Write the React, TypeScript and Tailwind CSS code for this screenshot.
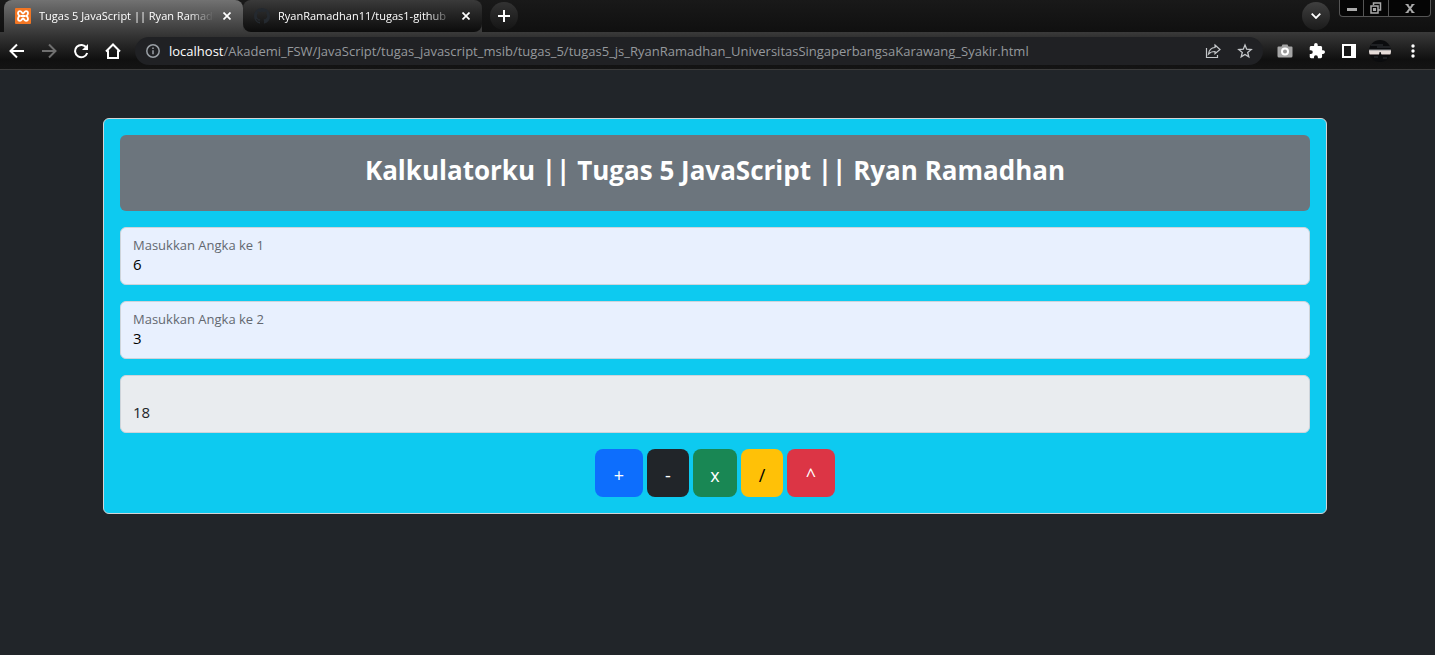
import { useState } from 'react';

const fontStack = "font-['Open_Sans','Noto_Sans',sans-serif]";

function XamppIcon() {
  return (
    <svg width="16" height="16" viewBox="0 0 16 16" aria-hidden="true" className="shrink-0">
      <rect width="16" height="16" rx="1" fill="#f37623" />
      <path
        d="M5 3.200C3.500 3.200 3 4.200 3 5.300c0 1.400.6 2 1.500 2.700C3.600 8.700 3 9.300 3 10.700c0 1.100.5 2.100 2 2.100 1.800 0 1.800-2.300 3-2.300s1.200 2.300 3 2.300c1.500 0 2-1 2-2.100 0-1.400-.6-2-1.500-2.700.9-.7 1.500-1.300 1.500-2.700 0-1.100-.5-2.100-2-2.100-1.800 0-1.800 2.300-3 2.300S6.800 3.200 5 3.200z"
        fill="none"
        stroke="#fff"
        strokeWidth="1.800"
        strokeLinejoin="round"
      />
      <path d="M6 8h4" stroke="#fff" strokeWidth="1.800" strokeLinecap="round" />
    </svg>
  );
}

function GithubIcon() {
  return (
    <svg width="16" height="16" viewBox="0 0 16 16" aria-hidden="true" className="shrink-0">
      <path
        fill="#24292f"
        d="M8 0C3.580 0 0 3.580 0 8c0 3.540 2.290 6.530 5.470 7.590.4.070.550-.170.550-.380 0-.190-.010-.820-.010-1.490-2.010.370-2.530-.490-2.690-.940-.090-.230-.480-.940-.820-1.130-.280-.150-.680-.520-.010-.530.630-.010 1.080.580 1.230.820.720 1.210 1.870.870 2.330.660.070-.520.280-.870.510-1.070-1.780-.2-3.640-.890-3.640-3.950 0-.870.310-1.590.820-2.150-.080-.2-.360-1.020.080-2.120 0 0 .670-.210 2.200.820a7.600 7.600 0 0 1 4 0c1.530-1.040 2.200-.820 2.200-.820.440 1.100.160 1.920.080 2.120.510.560.820 1.270.820 2.150 0 3.070-1.870 3.750-3.650 3.950.290.250.540.730.540 1.480 0 1.070-.010 1.930-.010 2.200 0 .210.150.460.550.380A8 8 0 0 0 16 8c0-4.420-3.580-8-8-8z"
      />
    </svg>
  );
}

function CloseIcon() {
  return (
    <svg width="8" height="8" viewBox="0 0 8 8" stroke="#fff" strokeWidth="1.700" aria-hidden="true">
      <path d="M.5.5l7 7M7.500.500l-7 7" />
    </svg>
  );
}

function Avatar() {
  return (
    <svg width="22" height="22" viewBox="0 0 22 22" aria-hidden="true">
      <clipPath id="avatar-clip">
        <circle cx="11" cy="11" r="11" />
      </clipPath>
      <g clipPath="url(#avatar-clip)">
        <rect width="22" height="22" fill="#0b0c0e" />
        <path d="M2 5h12M8 7h14" stroke="#34373b" />
        <rect y="9.500" width="22" height="2" fill="#8d8f93" />
        <rect y="10.500" width="22" height="3.500" fill="#e5dcd8" />
        <rect y="14" width="22" height="1" fill="#756b6b" />
        <path d="M10 22v-7l.6-3h1l.9 3v7z" fill="#0b0c0e" />
        <path d="M5 17h4M14 18h4" stroke="#303236" />
      </g>
    </svg>
  );
}

function BrowserTabs() {
  return (
    <div className="flex h-8 items-start bg-linear-to-b from-[#191919] to-[#101010] pl-1">
      <div className="flex h-8 w-[239px] items-center gap-2 rounded-t-lg bg-linear-to-b from-[#727272] to-[#3a3a3a] pr-[11px] pl-[11px]">
        <XamppIcon />
        <span className="min-w-0 flex-1 overflow-hidden text-[11px] leading-4 whitespace-nowrap text-white mask-r-from-85%">
          Tugas 5 JavaScript || Ryan Ramadhan
        </span>
        <button aria-label="Close tab" className="p-px"><CloseIcon /></button>
      </div>
      <div className="h-8 w-[239px] bg-linear-to-b from-[#191919] from-70% to-[#3a3a3a] to-70%">
        <div className="flex h-8 items-center gap-2 rounded-lg bg-linear-to-b from-[#3a3a3a] to-[#0c0c0c] pr-[11px] pl-[11px]">
          <GithubIcon />
          <span className="min-w-0 flex-1 overflow-hidden text-[11px] leading-4 whitespace-nowrap text-white mask-r-from-85%">
            RyanRamadhan11/tugas1-github
          </span>
          <button aria-label="Close tab" className="p-px"><CloseIcon /></button>
        </div>
      </div>
      <button
        aria-label="New tab"
        className="mt-0.5 ml-2 grid size-7 place-items-center rounded-full bg-linear-to-b from-[#333] to-[#151515]"
      >
        <svg width="12" height="12" viewBox="0 0 12 12" stroke="#fff" strokeWidth="2" aria-hidden="true">
          <path d="M6 0v12M0 6h12" />
        </svg>
      </button>
      <div className="flex-1" />
      <button
        aria-label="Search tabs"
        className="mt-0.5 mr-[9px] grid size-7 place-items-center rounded-full bg-linear-to-b from-[#404040] to-[#1b1b1b]"
      >
        <svg width="10" height="6" viewBox="0 0 10 6" fill="none" stroke="#fff" strokeWidth="1.800" aria-hidden="true">
          <path d="M.7.7L5 5 9.300.700" />
        </svg>
      </button>
      <div className="mr-1 flex h-[17px] divide-x divide-[#555] rounded-b border border-t-0 border-[#555] bg-[#050505]">
        <button aria-label="Minimize" className="grid w-6 place-items-center">
          <svg width="10" height="10" viewBox="0 0 10 10" aria-hidden="true">
            <path d="M0 5h10v3H0z" fill="#aaa" />
          </svg>
        </button>
        <button aria-label="Restore" className="grid w-[25px] place-items-center">
          <svg width="12" height="12" viewBox="0 0 12 12" fill="none" stroke="#aaa" strokeWidth="1.500" aria-hidden="true">
            <path d="M3.500 3V1h7v7h-2M1 4h7v7H1zM3.700 6.700h1.600v1.600H3.700z" />
          </svg>
        </button>
        <button aria-label="Close" className="grid w-[41px] place-items-center">
          <svg width="10" height="9" viewBox="0 0 10 9" stroke="#aaa" strokeWidth="2" aria-hidden="true">
            <path d="M2 .5l6 8M8 .5l-6 8" />
            <path d="M.5.5h3M6.500.5h3M.5 8.500h3M6.500 8.500h3" strokeWidth="1" />
          </svg>
        </button>
      </div>
    </div>
  );
}

function Toolbar() {
  return (
    <div className="flex h-[38px] items-center border-b border-b-[#3c3c3c] bg-linear-to-b from-[#3a3a3a] via-[#101010] via-75% to-[#141414] pr-5 pl-[9px]">
      <div className="flex gap-4 text-white">
        <button aria-label="Back">
          <svg width="16" height="16" viewBox="0 0 16 16" fill="none" stroke="currentColor" strokeWidth="2" aria-hidden="true">
            <path d="M15 8H2.500M8 1.500L1.500 8 8 14.500" />
          </svg>
        </button>
        <button aria-label="Forward" className="text-[#6f6f6f]">
          <svg width="16" height="16" viewBox="0 0 16 16" fill="none" stroke="currentColor" strokeWidth="2" aria-hidden="true">
            <path d="M1 8h12.500M8 1.500L14.500 8 8 14.500" />
          </svg>
        </button>
        <button aria-label="Reload">
          <svg width="16" height="16" viewBox="0 0 16 16" fill="none" stroke="currentColor" strokeWidth="2" aria-hidden="true">
            <path d="M13.500 4.700A6.200 6.200 0 1 0 14.200 10" />
            <path d="M15 1v6H9z" fill="currentColor" stroke="none" />
          </svg>
        </button>
        <button aria-label="Home">
          <svg width="16" height="16" viewBox="0 0 16 16" fill="none" stroke="currentColor" strokeWidth="2" aria-hidden="true">
            <path d="M1 8.500L8 1.500l7 7M3 7.500V15h10V7.500" />
          </svg>
        </button>
      </div>
      <div className="ml-[14px] flex h-7 min-w-0 flex-1 items-center rounded-full bg-[#202124] pr-[10px] pl-[11px]">
        <svg width="14" height="14" viewBox="0 0 14 14" fill="none" stroke="#9aa0a6" strokeWidth="1.500" aria-hidden="true" className="shrink-0">
          <circle cx="7" cy="7" r="6.200" />
          <path d="M7 6.200v4M7 3.500v1.500" />
        </svg>
        <div className="ml-[9px] min-w-0 flex-1 overflow-hidden text-[13px] leading-5 whitespace-nowrap text-[#96999d]">
          <span className="text-white">localhost</span>
          /Akademi_FSW/JavaScript/tugas_javascript_msib/tugas_5/tugas5_js_RyanRamadhan_UniversitasSingaperbangsaKarawang_Syakir.html
        </div>
        <button aria-label="Share" className="mr-4">
          <svg width="16" height="16" viewBox="0 0 16 16" fill="none" stroke="#c4c7ca" strokeWidth="1.200" aria-hidden="true">
            <path d="M1.500 5v9.500h11V12M10 2l5 4.500-5 4.300V8.500c-3 0-5 .8-6.500 2.500.5-4 2.800-6.300 6.500-6.500z" />
          </svg>
        </button>
        <button aria-label="Bookmark this page">
          <svg width="16" height="16" viewBox="0 0 16 16" fill="none" stroke="#c4c7ca" strokeWidth="1.300" aria-hidden="true">
            <path d="M8 2l1.700 4.200 4.500.300-3.500 2.900 1.100 4.400L8 11.400l-3.800 2.400 1.100-4.400-3.500-2.900 4.500-.300z" />
          </svg>
        </button>
      </div>
      <div className="ml-[14px] flex items-center">
        <button aria-label="Screenshot extension" className="mr-4">
          <svg width="16" height="14" viewBox="0 0 16 14" aria-hidden="true">
            <path d="M1.500 2.500h3L5.500.5h5l1 2h3q1 0 1 1V12q0 1.500-1.500 1.500H2Q.5 13.500.5 12V3.500q0-1 1-1z" fill="#a5a5a5" />
            <circle cx="8" cy="7.500" r="3" fill="#999" stroke="#fff" strokeWidth="2" />
          </svg>
        </button>
        <button aria-label="Extensions" className="mr-4">
          <svg width="16" height="16" viewBox="1 1 22 22" fill="#fff" aria-hidden="true">
            <path d="M20.500 11H19V7c0-1.100-.9-2-2-2h-4V3.500a2.500 2.500 0 0 0-5 0V5H4c-1.100 0-2 .9-2 2v3.800h1.500a2.700 2.700 0 0 1 0 5.400H2V20c0 1.100.9 2 2 2h3.800v-1.500a2.700 2.700 0 0 1 5.400 0V22H17c1.100 0 2-.9 2-2v-4h1.500a2.500 2.500 0 0 0 0-5z" />
          </svg>
        </button>
        <button aria-label="Side panel" className="mr-3">
          <svg width="16" height="16" viewBox="0 0 16 16" aria-hidden="true">
            <path d="M1 1h14v14H1z" fill="#fff" />
            <path d="M3 3h7v10H3z" fill="#181818" />
          </svg>
        </button>
        <button aria-label="Profile" className="mr-5"><Avatar /></button>
        <button aria-label="Menu">
          <svg width="4" height="14" viewBox="0 0 4 14" fill="#fff" aria-hidden="true">
            <circle cx="2" cy="2" r="1.700" />
            <circle cx="2" cy="7" r="1.700" />
            <circle cx="2" cy="12" r="1.700" />
          </svg>
        </button>
      </div>
    </div>
  );
}

type FieldProps = {
  id: string;
  label: string;
  value: string;
  onChange: (value: string) => void;
};

function NumberField({ id, label, value, onChange }: FieldProps) {
  return (
    <div className="flex h-[58px] flex-col rounded-md border border-[#ced4da] bg-[#e8f0fe] px-3 pt-[7px]">
      <label htmlFor={id} className="text-[13px] leading-5 text-[#636870]">{label}</label>
      <input
        id={id}
        value={value}
        onChange={(e) => onChange(e.target.value)}
        className="h-[18px] w-full bg-transparent text-[15px] leading-[18px] text-black outline-none"
      />
    </div>
  );
}

const operations = [
  { sign: '+', className: 'w-12 bg-[#0d6efd] text-white', run: (a: number, b: number) => a + b },
  { sign: '-', className: 'w-[42px] bg-[#212529] text-white', run: (a: number, b: number) => a - b },
  { sign: 'x', className: 'w-11 bg-[#198754] text-white', run: (a: number, b: number) => a * b },
  { sign: '/', className: 'w-[42px] bg-[#ffc107] text-black', run: (a: number, b: number) => a / b },
  { sign: '^', className: 'w-12 bg-[#dc3545] text-white', run: (a: number, b: number) => a ** b },
];

export default function App() {
  const [first, setFirst] = useState('6');
  const [second, setSecond] = useState('3');
  const [result, setResult] = useState('18');

  return (
    <div className={`min-h-screen bg-[#212529] ${fontStack}`}>
      <header>
        <BrowserTabs />
        <Toolbar />
      </header>
      <main className="pt-12 pr-[108px] pb-12 pl-[103px]">
        <div className="flex flex-col gap-4 rounded-md border border-[#d3d4d5] bg-[#0dcaf0] p-4">
          <h1 className="h-[76px] rounded-md bg-[#6c757d] pt-4 text-center text-[26px] leading-[38px] font-bold text-white">
            Kalkulatorku || Tugas 5 JavaScript || Ryan Ramadhan
          </h1>
          <NumberField id="angka1" label="Masukkan Angka ke 1" value={first} onChange={setFirst} />
          <NumberField id="angka2" label="Masukkan Angka ke 2" value={second} onChange={setSecond} />
          <input
            aria-label="Hasil"
            readOnly
            value={result}
            className="h-[58px] w-full rounded-md border border-[#ced4da] bg-[#e9ecef] px-3 pt-[26px] pb-[10px] text-[15px] leading-5 text-[#212529] outline-none"
          />
          <div className="flex justify-center gap-1">
            {operations.map(({ sign, className, run }) => (
              <button
                key={sign}
                onClick={() => setResult(String(run(Number(first), Number(second))))}
                className={`h-12 rounded-lg pt-1 text-lg leading-7 ${className}`}
              >
                {sign}
              </button>
            ))}
          </div>
        </div>
      </main>
    </div>
  );
}
